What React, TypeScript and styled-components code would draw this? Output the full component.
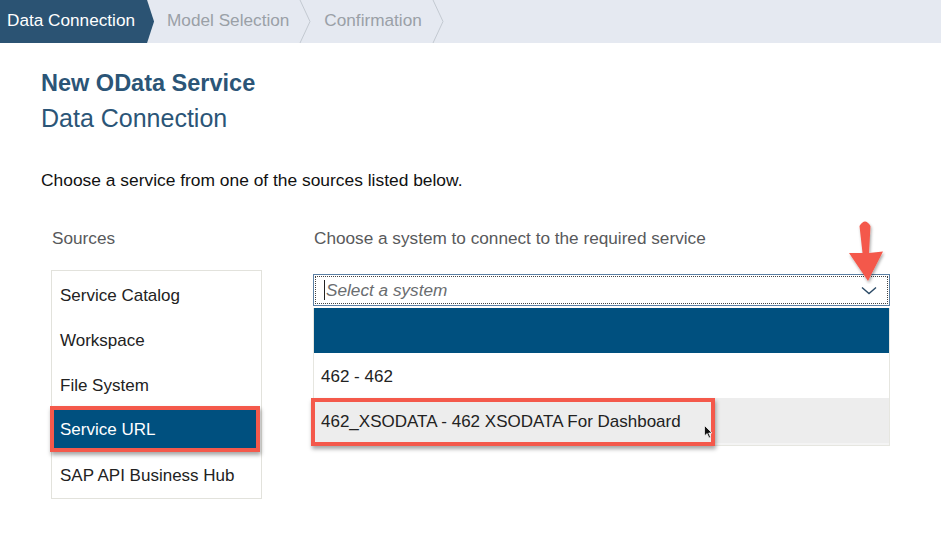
import React from "react";
import styled, { createGlobalStyle } from "styled-components";

const Global = createGlobalStyle`
  html, body { margin: 0; padding: 0; background: #ffffff; }
  body { font-family: "Liberation Sans", Arial, sans-serif; width: 941px; height: 547px; overflow: hidden; }
  * { box-sizing: border-box; }
`;

const Page = styled.div`
  position: relative;
  width: 941px;
  height: 547px;
  background: #fff;
`;

const StepBar = styled.div`
  display: flex;
  align-items: stretch;
  height: 43px;
  background: #e5e9f1;
`;

const Step = styled.div<{ $active?: boolean }>`
  display: flex;
  align-items: center;
  height: 43px;
  padding-bottom: 3px;
  font-size: 17.2px;
  color: ${(p) => (p.$active ? "#ffffff" : "#9aa0a7")};
  background: ${(p) => (p.$active ? "#2b5373" : "transparent")};
  padding-left: ${(p) => (p.$active ? "7px" : "13px")};
  padding-right: ${(p) => (p.$active ? "19px" : "0")};
  clip-path: ${(p) =>
    p.$active ? "polygon(0 0, calc(100% - 7px) 0, 100% 50%, calc(100% - 7px) 100%, 0 100%)" : "none"};
`;

const Sep = styled.svg`
  display: block;
  width: 12px;
  height: 43px;
  margin-left: 10px;
`;

const Content = styled.div`
  padding: 26px 0 0 41px;
`;

const Title = styled.h1`
  margin: 0;
  font-size: 23.5px;
  font-weight: 700;
  color: #2b5577;
  line-height: 28px;
`;

const Subtitle = styled.h2`
  margin: 6px 0 0;
  font-size: 25px;
  font-weight: 400;
  color: #2b5577;
  line-height: 30px;
`;

const Intro = styled.p`
  margin: 37px 0 0;
  font-size: 17.4px;
  color: #111;
  line-height: 20px;
`;

const Columns = styled.div`
  display: flex;
  margin-top: 38px;
  margin-left: 10px;
  gap: 51px;
`;

const Column = styled.div<{ $w: number }>`
  width: ${(p) => p.$w}px;
  display: flex;
  flex-direction: column;
`;

const Label = styled.div`
  font-size: 17.2px;
  color: #58595b;
  line-height: 20px;
  height: 20px;
  padding-left: 1px;
  white-space: nowrap;
`;

const SourceList = styled.div`
  margin-top: 22px;
  border: 1px solid #e2e2dc;
  padding: 2px 0 0 0;
  display: flex;
  flex-direction: column;
`;

const SourceItem = styled.div<{ $selected?: boolean }>`
  height: 45px;
  display: flex;
  align-items: center;
  font-size: 17px;
  padding-left: 8px;
  color: #222;
  ${(p) =>
    p.$selected
      ? `
    color: #fff;
    background: #00507f;
    border: 4px solid #f4594b;
    padding-left: 6px;
    padding-top: 2px;
    height: 46px;
    width: 210px;
    margin: -2px 0 1px -2px;
    box-shadow: 1px 3px 4px rgba(0,0,0,0.35);
    position: relative;
  `
      : ""}
`;

const SelectBox = styled.div`
  margin-top: 26px;
  height: 32px;
  border: 1px solid #5b7fa3;
  padding: 1px;
`;

const SelectInner = styled.div`
  height: 100%;
  border: 1px dotted #444;
  display: flex;
  align-items: center;
  padding: 0 10px 0 8px;
`;

const Caret = styled.span`
  width: 1px;
  height: 20px;
  background: #222;
  margin-right: 1px;
`;

const Placeholder = styled.span`
  flex: 1;
  font-size: 17.2px;
  font-style: italic;
  color: #6a6d70;
`;

const Dropdown = styled.div`
  position: relative;
  margin-top: 2px;
  border: 1px solid #e6e6e0;
  border-top: none;
  display: flex;
  flex-direction: column;
`;

const Option = styled.div<{ $tone: "header" | "plain" | "hover" }>`
  height: ${(p) => (p.$tone === "hover" ? "47px" : "45px")};
  display: flex;
  align-items: center;
  padding-left: 7px;
  padding-top: ${(p) => (p.$tone === "plain" ? "3px" : "0")};
  font-size: 17px;
  color: #222;
  border-bottom: ${(p) => (p.$tone === "hover" ? "2px solid #f4f4f4" : "none")};
  background: ${(p) =>
    p.$tone === "header" ? "#00507f" : p.$tone === "hover" ? "#ededed" : "#ffffff"};
`;

const Highlight = styled.div`
  position: absolute;
  left: -3px;
  top: 90px;
  width: 404px;
  height: 48px;
  border: 4px solid #f4594b;
  box-shadow: 1px 3px 4px rgba(0, 0, 0, 0.35);
  display: flex;
  align-items: center;
  padding-left: 6px;
  font-size: 17px;
  color: #222;
  background: #ededed;
`;

const Cursor = styled.svg`
  position: absolute;
  left: 390px;
  top: 117px;
  width: 9px;
  height: 14px;
`;

const Arrow = styled.svg`
  position: absolute;
  left: 846px;
  top: 218px;
  width: 40px;
  height: 66px;
`;

export default function App() {
  return (
    <Page>
      <Global />
      <StepBar>
        <Step $active>Data Connection</Step>
        <Step>Model Selection</Step>
        <Sep viewBox="0 0 12 43">
          <polyline points="1,0 11,21.5 1,43" fill="none" stroke="#c3c9d1" strokeWidth="1" />
        </Sep>
        <Step>Confirmation</Step>
        <Sep viewBox="0 0 12 43">
          <polyline points="1,0 11,21.5 1,43" fill="none" stroke="#c3c9d1" strokeWidth="1" />
        </Sep>
      </StepBar>
      <Content>
        <Title>New OData Service</Title>
        <Subtitle>Data Connection</Subtitle>
        <Intro>Choose a service from one of the sources listed below.</Intro>
        <Columns>
          <Column $w={211}>
            <Label>Sources</Label>
            <SourceList>
              <SourceItem>Service Catalog</SourceItem>
              <SourceItem>Workspace</SourceItem>
              <SourceItem>File System</SourceItem>
              <SourceItem $selected>Service URL</SourceItem>
              <SourceItem>SAP API Business Hub</SourceItem>
            </SourceList>
          </Column>
          <Column $w={577}>
            <Label>Choose a system to connect to the required service</Label>
            <SelectBox>
              <SelectInner>
                <Caret />
                <Placeholder>Select a system</Placeholder>
                <svg width="16" height="9" viewBox="0 0 16 9">
                  <polyline points="1,1.5 8,7.5 15,1.5" fill="none" stroke="#2b4a66" strokeWidth="1.4" />
                </svg>
              </SelectInner>
            </SelectBox>
            <Dropdown>
              <Option $tone="header" />
              <Option $tone="plain">462 - 462</Option>
              <Option $tone="hover" />
              <Highlight>462_XSODATA - 462 XSODATA For Dashboard</Highlight>
              <Cursor viewBox="0 0 9 14">
                <path d="M0.5,0.5 L0.5,11 L3,8.5 L5,13 L6.6,12.3 L4.7,8 L8,8 Z" fill="#111" stroke="#fff" strokeWidth="0.7" />
              </Cursor>
            </Dropdown>
          </Column>
        </Columns>
      </Content>
      <Arrow viewBox="0 0 40 66">
        <defs>
          <filter id="sh" x="-50%" y="-50%" width="200%" height="200%">
            <feDropShadow dx="1" dy="2" stdDeviation="1.5" floodColor="#000" floodOpacity="0.35" />
          </filter>
        </defs>
        <path
          filter="url(#sh)"
          fill="#f4594b"
          d="M13.5,8 Q19,-1 24.5,8 L23,35 L37,33.5 L22,63 L3,35 L16.5,35 Z"
        />
      </Arrow>
    </Page>
  );
}
